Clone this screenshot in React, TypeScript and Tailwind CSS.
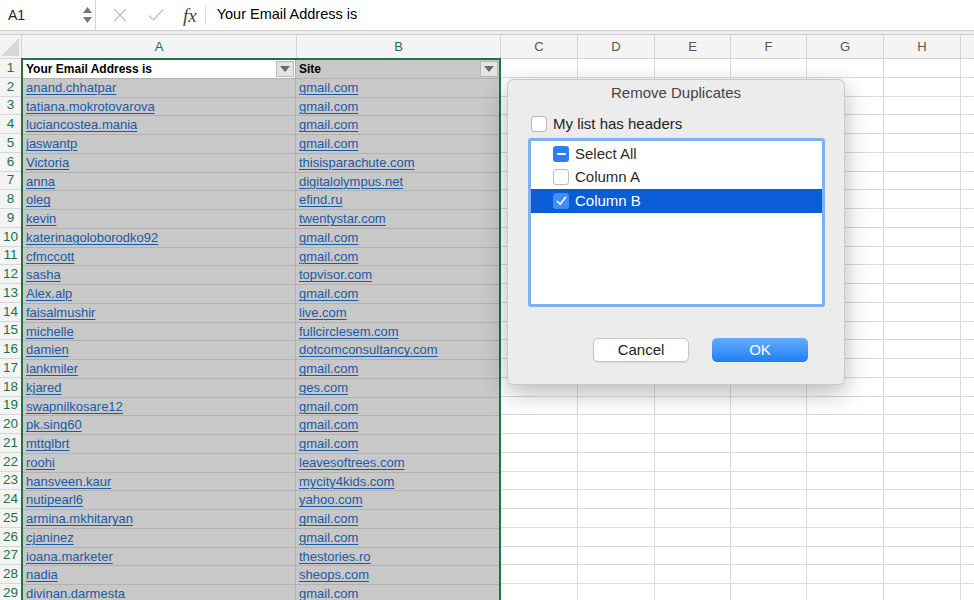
import React from "react";

const rows: [string, string][] = [
  ["anand.chhatpar", "gmail.com"],
  ["tatiana.mokrotovarova", "gmail.com"],
  ["luciancostea.mania", "gmail.com"],
  ["jaswantp", "gmail.com"],
  ["Victoria", "thisisparachute.com"],
  ["anna", "digitalolympus.net"],
  ["oleg", "efind.ru"],
  ["kevin", "twentystar.com"],
  ["katerinagoloborodko92", "gmail.com"],
  ["cfmccott", "gmail.com"],
  ["sasha", "topvisor.com"],
  ["Alex.alp", "gmail.com"],
  ["faisalmushir", "live.com"],
  ["michelle", "fullcirclesem.com"],
  ["damien", "dotcomconsultancy.com"],
  ["lankmiler", "gmail.com"],
  ["kjared", "ges.com"],
  ["swapnilkosare12", "gmail.com"],
  ["pk.sing60", "gmail.com"],
  ["mttglbrt", "gmail.com"],
  ["roohi", "leavesoftrees.com"],
  ["hansveen.kaur", "mycity4kids.com"],
  ["nutipearl6", "yahoo.com"],
  ["armina.mkhitaryan", "gmail.com"],
  ["cjaninez", "gmail.com"],
  ["ioana.marketer", "thestories.ro"],
  ["nadia", "sheops.com"],
  ["divinan.darmesta", "gmail.com"],
];

const rightCols = [
  { name: "C", w: "w-[77px]" },
  { name: "D", w: "w-[77px]" },
  { name: "E", w: "w-[76px]" },
  { name: "F", w: "w-[76px]" },
  { name: "G", w: "w-[77px]" },
  { name: "H", w: "w-[77px]" },
  { name: "", w: "w-[40px]" },
];

function FilterButton() {
  return (
    <div className="w-[18px] h-[16px] bg-[#e4e4e4] border border-[#b9b9b9] flex items-center justify-center shrink-0">
      <svg width="10" height="6" viewBox="0 0 10 6">
        <polygon points="0,0 10,0 5,6" fill="#6b6b6b" />
      </svg>
    </div>
  );
}

function Link({ text }: { text: string }) {
  return (
    <span className="text-[#1b5aa7] underline decoration-1 underline-offset-[2px] whitespace-nowrap">
      {text}
    </span>
  );
}

function Dialog() {
  return (
    <div className="absolute left-[507px] top-[79px] w-[338px] h-[306px] bg-[#ececec] rounded-[6px] border border-[#c9c9c9] shadow-[0_8px_24px_rgba(0,0,0,0.28)] font-['Liberation_Sans',Arial,sans-serif]">
      <div className="h-[26px] flex items-center justify-center text-[15px] text-[#444]">
        Remove Duplicates
      </div>
      <div className="flex items-center gap-[6px] pl-[23px] mt-[10px] h-[16px]">
        <div className="w-[16px] h-[16px] rounded-[3px] bg-white border border-[#b8b8b8]" />
        <span className="text-[15px] text-[#1f1f1f]">My list has headers</span>
      </div>
      <div className="ml-[20px] mt-[6px] w-[297px] h-[169px] rounded-[3px] border-[3px] border-[#7eb0f3] bg-white pt-[1px]">
        <div className="h-[23.5px] flex items-center pl-[22px] gap-[6px]">
          <div className="w-[16px] h-[16px] rounded-[3px] bg-[#2e7cf6] flex items-center justify-center">
            <div className="w-[9px] h-[2px] bg-white rounded-sm" />
          </div>
          <span className="text-[15px] text-[#2b2b2b]">Select All</span>
        </div>
        <div className="h-[23.5px] flex items-center pl-[22px] gap-[6px]">
          <div className="w-[16px] h-[16px] rounded-[3px] bg-white border border-[#bdbdbd]" />
          <span className="text-[15px] text-[#2b2b2b]">Column A</span>
        </div>
        <div className="h-[23.5px] flex items-center pl-[22px] gap-[6px] bg-[#0a5dd6]">
          <div className="w-[16px] h-[16px] rounded-[3px] bg-[#3f8ef7] flex items-center justify-center">
            <svg width="11" height="10" viewBox="0 0 11 10">
              <path d="M1.5 5.5 L4.2 8.3 L9.5 1.2" stroke="white" strokeWidth="1.6" fill="none" strokeLinecap="round" strokeLinejoin="round" />
            </svg>
          </div>
          <span className="text-[15px] text-white">Column B</span>
        </div>
      </div>
      <div className="flex gap-[23px] pl-[85px] mt-[31px]">
        <button className="w-[96px] h-[24px] rounded-[5px] bg-white border border-[#c6c6c6] shadow-[0_1px_1px_rgba(0,0,0,0.08)] text-[15px] text-[#222]">
          Cancel
        </button>
        <button className="w-[96px] h-[24px] rounded-[5px] bg-gradient-to-b from-[#66abfb] to-[#157ef6] text-[15px] text-white">
          OK
        </button>
      </div>
    </div>
  );
}

export default function App() {
  return (
    <div className="relative w-[974px] h-[600px] overflow-hidden bg-white font-['Liberation_Sans',Arial,sans-serif]">
      {/* formula bar */}
      <div className="h-[31px] flex items-center border-b border-[#cdcdcd] bg-white">
        <div className="w-[96px] h-full flex items-center justify-between pl-[8px] pr-[3px] border-r border-[#d6d6d6]">
          <span className="text-[14px] text-[#222]">A1</span>
          <div className="flex flex-col gap-[4px]">
            <svg width="9" height="6" viewBox="0 0 9 6">
              <polygon points="0,6 9,6 4.5,0" fill="#777" />
            </svg>
            <svg width="9" height="6" viewBox="0 0 9 6">
              <polygon points="0,0 9,0 4.5,6" fill="#777" />
            </svg>
          </div>
        </div>
        <svg className="ml-[17px]" width="14" height="14" viewBox="0 0 14 14">
          <path d="M1 1 L13 13 M13 1 L1 13" stroke="#c4c4c4" strokeWidth="1.4" />
        </svg>
        <svg className="ml-[21px]" width="16" height="14" viewBox="0 0 16 14">
          <path d="M1 7.5 L5.5 12 L15 1.5" stroke="#c4c4c4" strokeWidth="1.4" fill="none" />
        </svg>
        <span className="ml-[19px] text-[19px] italic text-[#444] font-['Liberation_Serif',serif] leading-none">
          fx
        </span>
        <div className="ml-[8px] w-px h-[20px] bg-[#dcdcdc]" />
        <span className="ml-[11px] text-[14.5px] text-black">Your Email Address is</span>
      </div>
      <div className="h-[3px] bg-[#ededed] border-b border-[#cdcdcd] box-content" />

      {/* column headers */}
      <div className="h-[24px] flex bg-[#f4f4f4] border-b border-[#d4d4d4] text-[13px]">
        <div className="w-[22px] shrink-0 h-full flex items-end justify-end border-r border-[#d4d4d4]">
          <svg width="18" height="18" viewBox="0 0 18 18" className="mb-[2px] mr-[2px]">
            <polygon points="18,0 18,18 0,18" fill="#d8d8d8" />
          </svg>
        </div>
        <div className="w-[275px] shrink-0 h-full flex items-center justify-center text-[#1e7145] border-r border-[#d4d4d4]">A</div>
        <div className="w-[204px] shrink-0 h-full flex items-center justify-center text-[#1e7145] border-r border-[#d4d4d4]">B</div>
        {rightCols.map((c, i) => (
          <div key={i} className={`${c.w} shrink-0 h-full flex items-center justify-center text-[#555] border-r border-[#d4d4d4]`}>
            {c.name}
          </div>
        ))}
      </div>

      {/* grid body */}
      <div className="flex">
        <div className="w-[22px] shrink-0 bg-[#f4f4f4] border-r border-[#d4d4d4]">
          {Array.from({ length: 29 }, (_, i) => (
            <div key={i} className="h-[18.75px] flex items-center justify-center text-[13.5px] text-[#1e7145] border-b border-[#d8d8d8] box-border">
              {i + 1}
            </div>
          ))}
        </div>

        <div className="w-[480px] shrink-0 border-2 border-b-0 border-[#217346] -ml-px -mt-px bg-[#c8c8c8] text-[13px]">
          <div className="h-[18.75px] flex border-b border-[#b2b2b2] box-border">
            <div className="w-[273px] h-full flex items-center justify-between bg-white pl-[3px] pr-px border-r border-[#b2b2b2]">
              <span className="font-bold text-[12px] text-black">Your Email Address is</span>
              <FilterButton />
            </div>
            <div className="flex-1 h-full flex items-center justify-between pl-[3px] pr-[1px]">
              <span className="font-bold text-[12px] text-black">Site</span>
              <FilterButton />
            </div>
          </div>
          {rows.map(([a, b], i) => (
            <div key={i} className="h-[18.75px] flex border-b border-[#b2b2b2] box-border">
              <div className="w-[273px] h-full flex items-center pl-[3px] border-r border-[#b2b2b2]">
                <Link text={a} />
              </div>
              <div className="flex-1 h-full flex items-center pl-[3px]">
                <Link text={b} />
              </div>
            </div>
          ))}
        </div>

        <div className="flex-1 flex flex-col">
          {Array.from({ length: 29 }, (_, i) => (
            <div key={i} className="h-[18.75px] flex border-b border-[#dadada] box-border">
              {rightCols.map((c, j) => (
                <div key={j} className={`${c.w} shrink-0 h-full border-r border-[#dadada]`} />
              ))}
            </div>
          ))}
        </div>
      </div>

      <Dialog />
    </div>
  );
}
